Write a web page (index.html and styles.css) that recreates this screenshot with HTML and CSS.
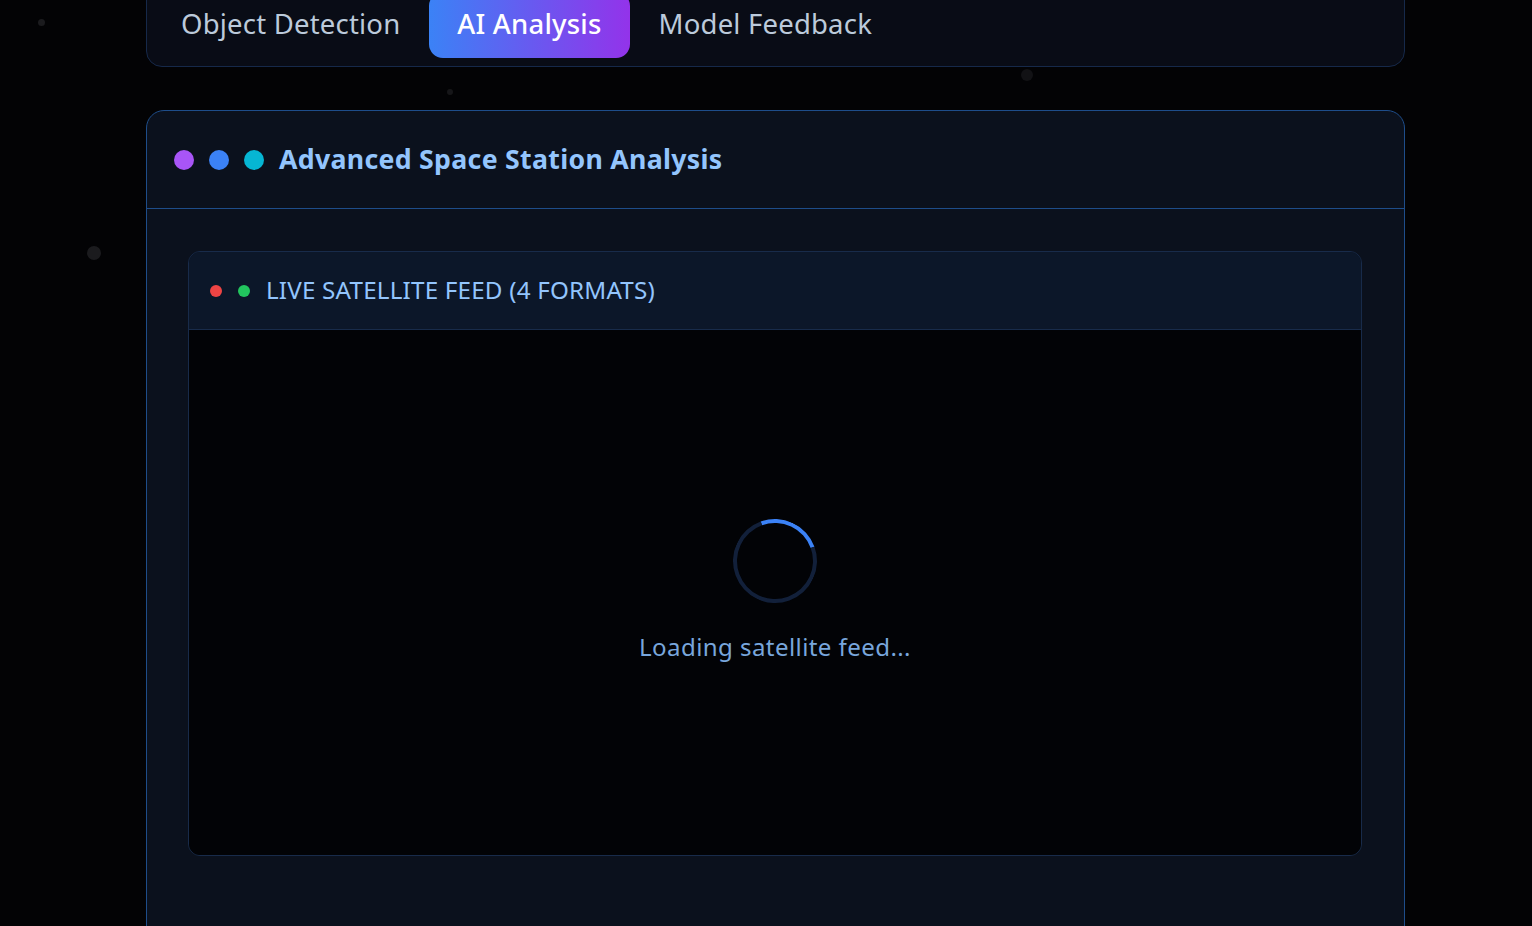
FILE: index.html
```html
<!DOCTYPE html>
<html lang="en">
<head>
<meta charset="utf-8">
<title>Advanced Space Station Analysis</title>
<link rel="stylesheet" href="styles.css">
</head>
<body>
<div class="stars">
  <span class="star s1"></span>
  <span class="star s2"></span>
  <span class="star s3"></span>
  <span class="star s4"></span>
</div>
<div class="page">
  <nav class="tabbar">
    <button class="tab">Object Detection</button>
    <button class="tab active">AI Analysis</button>
    <button class="tab">Model Feedback</button>
  </nav>

  <section class="panel">
    <header class="panel-head">
      <span class="dot dot-purple"></span>
      <span class="dot dot-blue"></span>
      <span class="dot dot-cyan"></span>
      <h1 class="panel-title">Advanced Space Station Analysis</h1>
    </header>
    <div class="panel-body">
      <div class="feed">
        <div class="feed-head">
          <span class="ldot ldot-red"></span>
          <span class="ldot ldot-green"></span>
          <span class="feed-title">LIVE SATELLITE FEED (4 FORMATS)</span>
        </div>
        <div class="feed-body">
          <div class="spinner"></div>
          <p class="loading">Loading satellite feed...</p>
        </div>
      </div>
    </div>
  </section>
</div>
</body>
</html>
```

FILE: styles.css
```css
html, body {
  margin: 0;
  padding: 0;
  height: 100%;
  overflow: hidden;
}
body {
  background: #030305;
  font-family: "Noto Sans", "Open Sans", sans-serif;
  position: relative;
}
.stars {
  position: absolute;
  inset: 0;
  pointer-events: none;
}
.star {
  position: absolute;
  border-radius: 50%;
  background: #1b1b1e;
}
.s1 { left: 38px; top: 19px; width: 7px; height: 7px; }
.s2 { left: 87px; top: 246px; width: 14px; height: 14px; }
.s3 { left: 447px; top: 89px; width: 6px; height: 6px; background: #161619; }
.s4 { left: 1021px; top: 69px; width: 12px; height: 12px; background: #121215; }

.page {
  position: relative;
  padding: 0 127px 0 146px;
}
.tabbar {
  margin-top: -16px;
  display: flex;
  gap: 1px;
  padding: 7px 6px 8px 6px;
  background: #090c16;
  border: 1px solid #16294a;
  border-radius: 16px;
}
.tab {
  box-sizing: border-box;
  font-family: inherit;
  font-size: 27.5px;
  color: #bccadb;
  background: none;
  border: 0;
  height: 66px;
  padding: 0 28px 4px;
  border-radius: 14px;
  letter-spacing: 0.2px;
}
.tab.active {
  color: #ffffff;
  background: linear-gradient(90deg, #3b82f6, #9333ea);
  font-weight: 500;
}

.panel {
  margin-top: 43px;
  background: #0b111d;
  border: 1px solid #1e4d8a;
  border-radius: 18px;
  height: 900px;
}
.panel-head {
  display: flex;
  align-items: center;
  height: 97px;
  padding: 0 27px;
  border-bottom: 1px solid #1e4d8a;
}
.dot {
  width: 20px;
  height: 20px;
  border-radius: 50%;
  margin-right: 15px;
}
.dot-purple { background: #a855f7; }
.dot-blue { background: #3b82f6; }
.dot-cyan { background: #06b6d4; }
.panel-title {
  margin: 0 0 2px;
  font-size: 26.7px;
  font-weight: 700;
  color: #93c5fd;
  letter-spacing: 0.3px;
}
.panel-body {
  padding: 42px 42px 0 41px;
}
.feed {
  border: 1px solid #182b4a;
  border-radius: 12px;
  overflow: hidden;
}
.feed-head {
  display: flex;
  align-items: center;
  height: 77px;
  padding: 0 21px;
  background: #0c1729;
  border-bottom: 1px solid #182b4a;
}
.ldot {
  width: 12px;
  height: 12px;
  border-radius: 50%;
  margin-right: 16px;
}
.ldot-red { background: #ef4444; }
.ldot-green { background: #22c55e; }
.feed-title {
  font-size: 24.2px;
  color: #93c5fd;
  letter-spacing: 0.2px;
  margin-bottom: 2px;
}
.feed-body {
  box-sizing: border-box;
  height: 525px;
  padding-bottom: 4px;
  background: #020306;
  display: flex;
  flex-direction: column;
  align-items: center;
  justify-content: center;
}
.spinner {
  width: 76px;
  height: 76px;
  border: 4px solid #12203a;
  border-top-color: #3b82f6;
  border-radius: 50%;
  transform: rotate(25deg);
  margin-bottom: 2px;
}
.loading {
  margin: 26px 0 0;
  font-size: 24.1px;
  line-height: 32px;
  color: #78a6dc;
  letter-spacing: 0.4px;
}
```
